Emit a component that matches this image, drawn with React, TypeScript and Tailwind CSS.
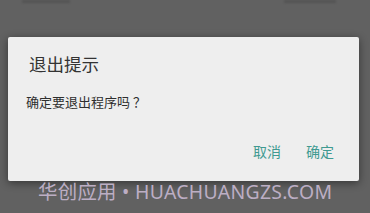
export default function App() {
  return (
    <div className="relative w-[370px] h-[213px] overflow-hidden bg-[#616161] font-['Noto_Sans_CJK_SC','Noto_Sans',sans-serif]">
      {/* faint page behind the dialog, cut off at the top */}
      <div className="absolute left-[22px] right-[34px] top-0 flex justify-between blur-[0.8px]">
        <div className="w-[48px] h-[3px] bg-[#545454]" />
        <div className="w-[52px] h-[3px] bg-[#545454]" />
      </div>
      <div className="pt-[37px] px-[8px]">
        <div className="w-[351px] h-[144px] bg-[#eeeeee] rounded-[2px] shadow-[0_2px_8px_rgba(0,0,0,0.45)] flex flex-col">
          <div className="pl-[21px] pt-[15px] text-[17.5px] leading-[24px] text-[#333333]">退出提示</div>
          <div className="pl-[18px] pt-[17px] text-[13px] leading-[18px] text-[#2e2e2e]">确定要退出程序吗 ？</div>
          <div className="mt-auto mb-[22px] flex justify-end gap-[25px] pr-[25px] text-[14px] leading-[16px] text-[#3f9a91]">
            <span>取消</span>
            <span>确定</span>
          </div>
        </div>
      </div>
      <div className="pl-[38px] pt-[1px] text-[19.4px] leading-[20px] tracking-[0.3px] text-[#bcaec4] font-['Noto_Sans','Noto_Sans_CJK_SC',sans-serif]">
        华创应用 • HUACHUANGZS.COM
      </div>
    </div>
  )
}
